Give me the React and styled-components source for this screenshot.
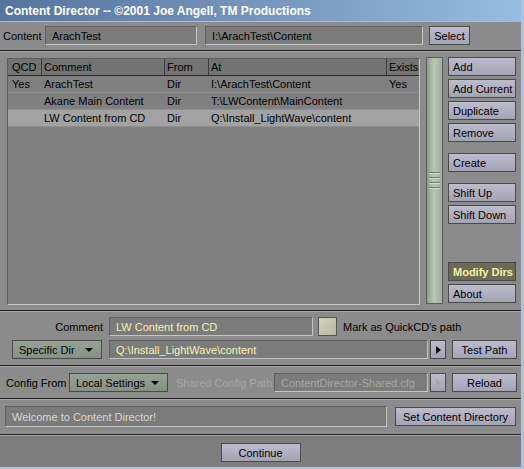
import React from 'react'
import styled, { createGlobalStyle } from 'styled-components'

const Global = createGlobalStyle`
  body { margin: 0; background: #8a8a8a; font-family: "Liberation Sans", Arial, sans-serif; }
`

const Window = styled.div`
  width: 521px;
  height: 467px;
  background: #8b8b8b;
  border-right: 3px solid #a9c4de;
  border-bottom: 2px solid #a9c4de;
  font-size: 11px;
  color: #000;
  display: flex;
  flex-direction: column;
  overflow: hidden;
`

const TitleBar = styled.div`
  height: 21px;
  background: linear-gradient(to right, #56759e, #7c9cc4 60%, #98bde0);
  color: #fff;
  font-weight: bold;
  font-size: 12px;
  display: flex;
  align-items: center;
  padding-left: 5px;
  border-bottom: 1px solid #a8bed6;
`

const Row = styled.div`
  display: flex;
  align-items: center;
  height: ${p => p.h || 19}px;
  margin-top: ${p => p.mt || 0}px;
  padding-left: ${p => p.pl || 0}px;
`

const Label = styled.span`
  width: ${p => (p.w ? p.w + 'px' : 'auto')};
  text-align: ${p => p.align || 'left'};
  color: ${p => (p.disabled ? '#a6a6a6' : '#000')};
  margin-left: ${p => p.ml || 0}px;
  white-space: nowrap;
  flex-shrink: 0;
`

const Field = styled.div`
  box-sizing: border-box;
  width: ${p => p.w}px;
  height: ${p => p.h || 19}px;
  margin-left: ${p => p.ml || 0}px;
  background: #7b7b7b;
  border-top: 1px solid #5e5e5e;
  border-left: 1px solid #5e5e5e;
  border-right: 1px solid #c4c4c4;
  border-bottom: 1px solid #c4c4c4;
  color: ${p => p.color || '#000'};
  padding-left: 6px;
  display: flex;
  align-items: center;
  white-space: nowrap;
  overflow: hidden;
  flex-shrink: 0;
`

const Button = styled.div`
  box-sizing: border-box;
  width: ${p => p.w}px;
  height: ${p => p.h || 19}px;
  margin-left: ${p => p.ml || 0}px;
  margin-top: ${p => p.mt || 0}px;
  background: ${p => (p.active ? '#6b6a55' : 'linear-gradient(#bcbccb, #a3a3b4)')};
  border: 1px solid #4a4a4a;
  color: ${p => (p.active ? '#f4f2a8' : p.disabled ? '#a9a9a9' : '#000')};
  font-weight: ${p => (p.active ? 'bold' : 'normal')};
  display: flex;
  align-items: center;
  justify-content: ${p => (p.center ? 'center' : 'flex-start')};
  padding-left: ${p => (p.center ? 0 : 4)}px;
  white-space: nowrap;
  flex-shrink: 0;
`

const Dropdown = styled.div`
  box-sizing: border-box;
  width: ${p => p.w}px;
  height: 19px;
  margin-left: ${p => p.ml || 0}px;
  background: linear-gradient(#98a196, #879084);
  border: 1px solid #4a4a4a;
  display: flex;
  align-items: center;
  justify-content: space-between;
  padding: 0 8px 0 6px;
  flex-shrink: 0;
`

const Arrow = styled.span`
  width: 0;
  height: 0;
  border-left: ${p => (p.right ? '5px solid' : '4px solid transparent')};
  border-right: ${p => (p.right ? '0' : '4px solid transparent')};
  border-top: ${p => (p.right ? '4px solid transparent' : '4px solid')};
  border-bottom: ${p => (p.right ? '4px solid transparent' : '0')};
  border-left-color: ${p => (p.right ? p.c : 'transparent')};
  border-top-color: ${p => (p.right ? 'transparent' : p.c)};
`

const Separator = styled.div`
  height: 1px;
  background: #1e1e1e;
  border-bottom: 1px solid #a8a8a8;
  margin-top: ${p => p.mt || 0}px;
`

const Main = styled.div`
  display: flex;
  height: 247px;
  margin-top: 6px;
  padding-left: 7px;
`

const List = styled.div`
  box-sizing: border-box;
  width: 413px;
  height: 247px;
  background: #808080;
  border-top: 1px solid #5e5e5e;
  border-left: 1px solid #5e5e5e;
  border-right: 1px solid #c8c8c8;
  border-bottom: 1px solid #c8c8c8;
`

const Grid = styled.div`
  display: grid;
  grid-template-columns: 34px 123px 44px 178px 1fr;
  height: 16px;
  align-items: center;
  background: ${p => (p.head ? '#737373' : p.sel ? '#a2a2a2' : 'transparent')};
  border-bottom: 1px solid ${p => (p.head ? '#2a2a2a' : '#8f8f8f')};
`

const Cell = styled.div`
  padding-left: ${p => (p.first ? 4 : 2)}px;
  white-space: nowrap;
  overflow: hidden;
  height: 100%;
  display: flex;
  align-items: center;
  border-right: ${p => (p.head ? '1px solid #3c3c3c' : 'none')};
`

const Scroll = styled.div`
  box-sizing: border-box;
  width: 17px;
  height: 247px;
  margin-left: 6px;
  background: linear-gradient(to right, #8e9c8c, #bac7b6 45%, #a1ae9e);
  border: 1px solid #5a5a5a;
  display: flex;
  flex-direction: column;
  justify-content: center;
  gap: 3px;
  padding: 0 2px;
  margin-top: -1px;
`

const Grip = styled.div`
  height: 1px;
  background: #6f7a6d;
  border-bottom: 1px solid #d3dccf;
`

const Side = styled.div`
  display: flex;
  flex-direction: column;
  margin-left: 5px;
  margin-top: -1px;
`

const Check = styled.div`
  box-sizing: border-box;
  width: 19px;
  height: 19px;
  margin-left: 5px;
  margin-right: 6px;
  background: linear-gradient(135deg, #d2d1bb, #b8b7a0);
  border: 1px solid #555;
  flex-shrink: 0;
`

const Footer = styled.div`
  flex: 1;
  background: #7e7e7e;
  display: flex;
  justify-content: center;
  padding-top: 7px;
`

const rows = [
  { q: 'Yes', c: 'ArachTest', f: 'Dir', a: 'I:\\ArachTest\\Content', e: 'Yes' },
  { q: '', c: 'Akane Main Content', f: 'Dir', a: 'T:\\LWContent\\MainContent', e: '' },
  { q: '', c: 'LW Content from CD', f: 'Dir', a: 'Q:\\Install_LightWave\\content', e: '', sel: true },
]

const sideButtons = [
  { t: 'Add', mt: 0 },
  { t: 'Add Current', mt: 3 },
  { t: 'Duplicate', mt: 3 },
  { t: 'Remove', mt: 3 },
  { t: 'Create', mt: 11 },
  { t: 'Shift Up', mt: 11 },
  { t: 'Shift Down', mt: 3 },
  { t: 'Modify Dirs', mt: 38, active: true },
  { t: 'About', mt: 3 },
]

export default function App() {
  return (
    <Window>
      <Global />
      <TitleBar>Content Director -- ©2001 Joe Angell, TM Productions</TitleBar>
      <Row mt={4} pl={3}>
        <Label w={42}>Content</Label>
        <Field w={152}>ArachTest</Field>
        <Field w={218} ml={8}>I:\ArachTest\Content</Field>
        <Button w={41} ml={6} center>Select</Button>
      </Row>
      <Separator mt={5} />
      <Main>
        <List>
          <Grid head>
            <Cell head first>QCD</Cell>
            <Cell head>Comment</Cell>
            <Cell head>From</Cell>
            <Cell head>At</Cell>
            <Cell>Exists</Cell>
          </Grid>
          {rows.map(r => (
            <Grid key={r.c} sel={r.sel}>
              <Cell first>{r.q}</Cell>
              <Cell>{r.c}</Cell>
              <Cell>{r.f}</Cell>
              <Cell>{r.a}</Cell>
              <Cell>{r.e}</Cell>
            </Grid>
          ))}
        </List>
        <Scroll>
          <Grip />
          <Grip />
          <Grip />
          <Grip />
        </Scroll>
        <Side>
          {sideButtons.map(b => (
            <Button key={b.t} w={68} mt={b.mt} active={b.active}>{b.t}</Button>
          ))}
        </Side>
      </Main>
      <Separator mt={5} />
      <Row mt={5}>
        <Label w={103} align="right">Comment</Label>
        <Field w={204} ml={6} color="#f4f2b4">LW Content from CD</Field>
        <Check />
        <Label>Mark as QuickCD's path</Label>
      </Row>
      <Row mt={4} pl={12}>
        <Dropdown w={90}>
          Specific Dir <Arrow c="#000" />
        </Dropdown>
        <Field w={319} ml={7} color="#f4f2b4">Q:\Install_LightWave\content</Field>
        <Button w={16} ml={2} center><Arrow right c="#000" /></Button>
        <Button w={65} ml={6} center>Test Path</Button>
      </Row>
      <Separator mt={6} />
      <Row mt={6} pl={6}>
        <Label w={63}>Config From</Label>
        <Dropdown w={99}>
          Local Settings <Arrow c="#000" />
        </Dropdown>
        <Label w={98} ml={8} disabled>Shared Config Path</Label>
        <Field w={154} color="#a6a6a6">ContentDirector-Shared.cfg</Field>
        <Button w={16} ml={2} center disabled><Arrow right c="#a6a6a6" /></Button>
        <Button w={65} ml={6} center>Reload</Button>
      </Row>
      <Separator mt={6} />
      <Row mt={6} pl={5} h={21}>
        <Field w={382} h={21} color="#d6d6d6">Welcome to Content Director!</Field>
        <Button w={121} ml={8} center>Set Content Directory</Button>
      </Row>
      <Separator mt={7} />
      <Footer>
        <Button w={80} center>Continue</Button>
      </Footer>
    </Window>
  )
}
